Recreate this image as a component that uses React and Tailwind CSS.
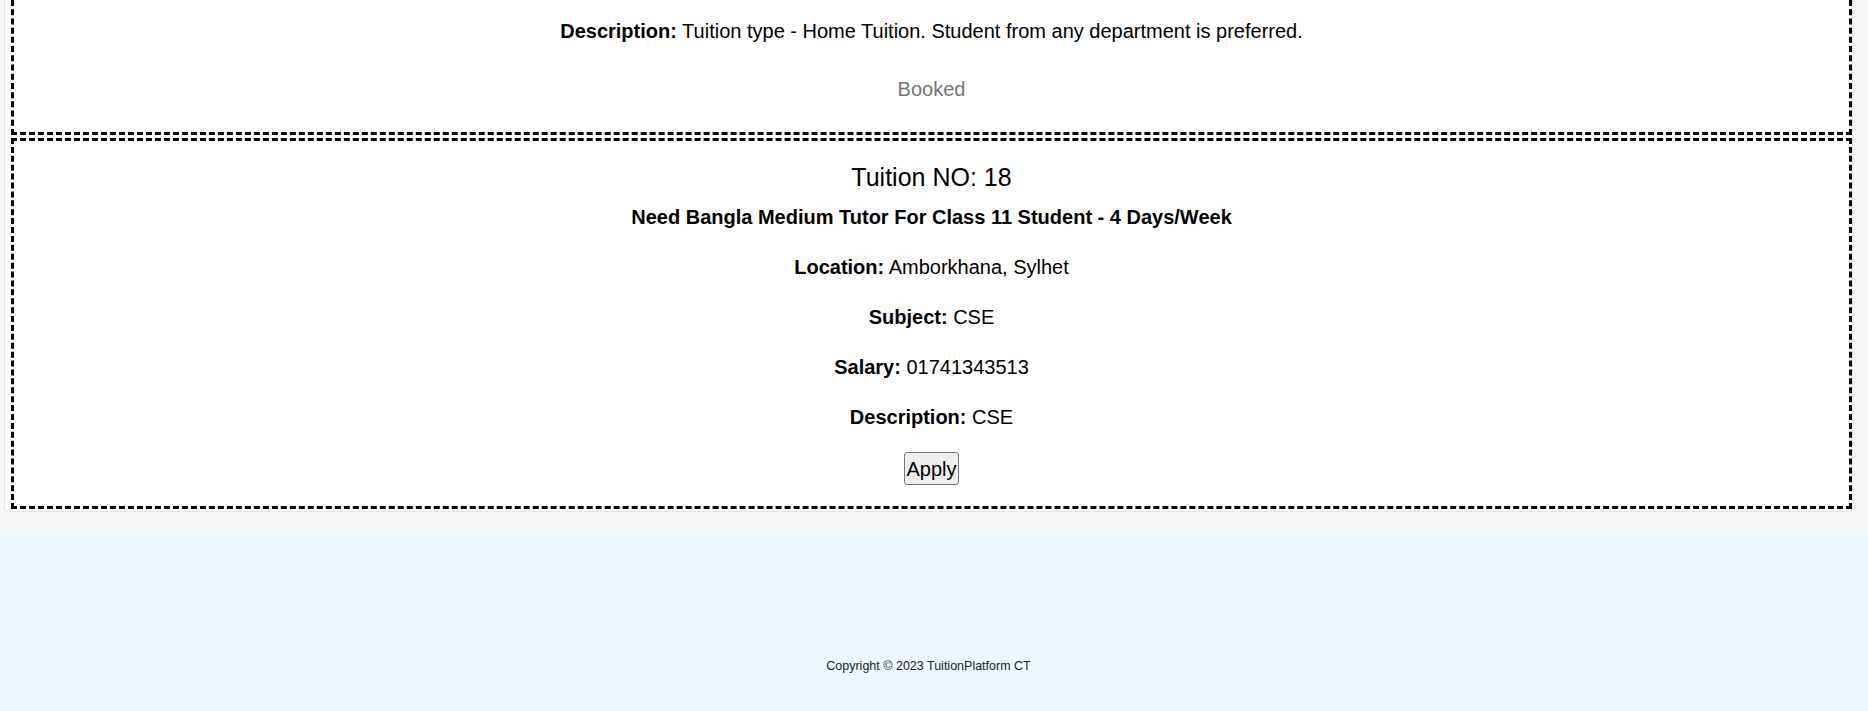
export default function App() {
  const fields = [
    { label: 'Location:', value: 'Amborkhana, Sylhet' },
    { label: 'Subject:', value: 'CSE' },
    { label: 'Salary:', value: '01741343513' },
    { label: 'Description:', value: 'CSE' },
  ];

  return (
    <div className="font-['Liberation_Sans',Arial,sans-serif] text-black">
      <div className="bg-[#f6f7f9] pb-[21px]">
        <div className="ml-[4px] mr-[15px] rounded-b-[4px] border border-t-0 border-[#e3e5e8] bg-white pb-[2px]">
          {/* previous card, scrolled past its top */}
          <div className="ml-[6px] border-x-[3px] border-b-[3px] border-dashed border-black pt-[16px] pb-[28px] text-center text-[20px] leading-[30px]">
            <p>
              <span className="font-bold">Description:</span> Tuition type - Home Tuition. Student from any department is preferred.
            </p>
            <p className="mt-[28px] text-[#757575]">Booked</p>
          </div>

          <div className="ml-[6px] mt-[3px] border-[3px] border-dashed border-black pt-[21px] pb-[21px] text-center text-[20px] leading-[30px]">
            <h2 className="text-[25px] leading-[30px]">Tuition NO: 18</h2>
            <h3 className="mt-[10px] font-bold">Need Bangla Medium Tutor For Class 11 Student - 4 Days/Week</h3>
            {fields.map((f) => (
              <p key={f.label} className="mt-[20px]">
                <span className="font-bold">{f.label}</span> {f.value}
              </p>
            ))}
            <button className="mt-[20px] h-[33px] rounded-[3px] border border-[#767676] bg-[#efefef] px-[1px] text-[20px] leading-[30px] text-black">
              Apply
            </button>
          </div>
        </div>
      </div>

      <footer className="h-[178px] bg-[#eef6fe] pt-[124px] pr-[11px] text-center text-[12.5px] leading-[18.75px] text-[#222]">
        Copyright © 2023 TuitionPlatform CT
      </footer>
    </div>
  );
}
